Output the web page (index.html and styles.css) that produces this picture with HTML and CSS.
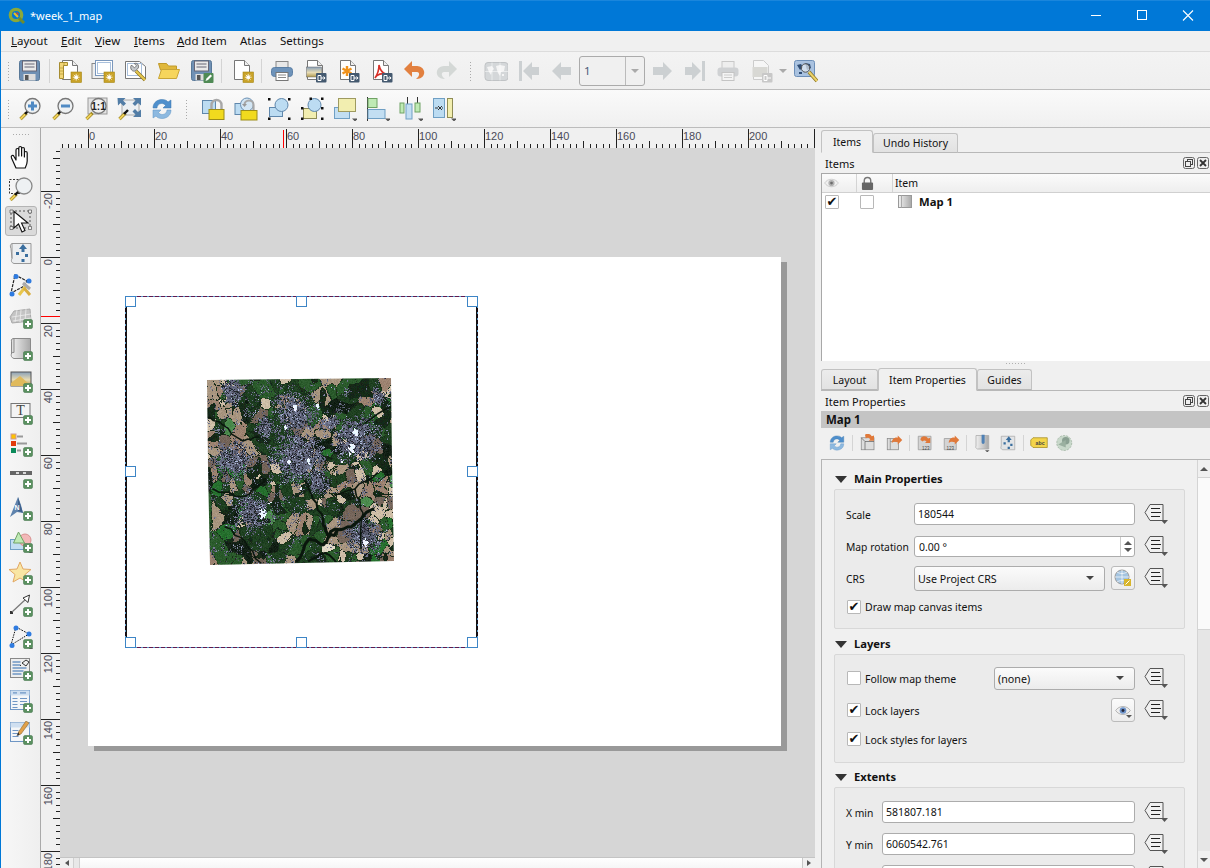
FILE: index.html
```html
<!DOCTYPE html>
<html lang="en">
<head>
<meta charset="utf-8">
<title>*week_1_map</title>
<link rel="stylesheet" href="styles.css">
</head>
<body>
<svg class="defs" width="0" height="0" aria-hidden="true">
<defs>
<linearGradient id="gmap" x1="0" x2="1"><stop offset="0" stop-color="#f2f2f2"/><stop offset="1" stop-color="#a8a8a8"/></linearGradient>
<linearGradient id="gsky" x1="0" x2="0" y1="0" y2="1"><stop offset="0" stop-color="#8aa0b8"/><stop offset=".55" stop-color="#e8dcb4"/><stop offset="1" stop-color="#b09a50"/></linearGradient>
<symbol id="plus" viewBox="0 0 24 24"><rect x="14.500" y="14.500" width="9" height="9" rx="1.500" fill="#5a9060" stroke="#4a7a50" stroke-width=".6"/><path d="M19 16v6M16 19h6" stroke="#fff" stroke-width="2"/></symbol>
<symbol id="gold" viewBox="0 0 24 24"><rect x="13" y="13" width="10.500" height="10.500" fill="#c9a227" stroke="#a58714" stroke-width=".6"/><circle cx="18.200" cy="18.200" r="1.700" fill="#fff"/><path d="M18.200 14.800v6.800M14.800 18.200h6.800M15.800 15.800l4.800 4.800M20.600 15.800l-4.800 4.800" stroke="#fff" stroke-width=".8"/></symbol>
<symbol id="xb" viewBox="0 0 24 24"><rect x="13" y="14" width="10.500" height="9.500" rx="1" fill="#44596f"/><path d="M15 16.500h3v5h-3zM18 19h4M20.500 17.500l1.600 1.500-1.600 1.500" fill="none" stroke="#fff"/></symbol>
<symbol id="doc" viewBox="0 0 24 24"><path d="M4.500 1.500h10l5 5v14h-15z" fill="#fff" stroke="#777"/><path d="M14.500 1.500v5h5" fill="#eee" stroke="#777"/></symbol>
<symbol id="floppy" viewBox="0 0 24 24"><rect x="1.500" y="1.500" width="20" height="20" rx="2" fill="#6f90b4" stroke="#587898"/><rect x="4.500" y="2" width="14" height="10" fill="#e9e9e9" stroke="#667"/><path d="M6.500 5h10M6.500 8h10" stroke="#667"/><rect x="5.500" y="15" width="12" height="6.500" fill="#ddd"/><rect x="7" y="16" width="3.500" height="5" fill="#555"/></symbol>
<symbol id="mag" viewBox="0 0 24 24"><path d="M2.500 22l6-6" stroke="#9c8420" stroke-width="3.200"/><path d="M2.500 22l5-5" stroke="#efd05a" stroke-width="1.800"/><path d="M7 17l3.500-3.500" stroke="#111" stroke-width="2.400"/><circle cx="14.500" cy="9" r="7.500" fill="#eef1f3" stroke="#777" stroke-width="1.300"/></symbol>
<symbol id="printer" viewBox="0 0 24 24"><rect x="6" y="2.500" width="12" height="7" fill="#e8e8e8" stroke="#888"/><rect x="1.500" y="8.500" width="21" height="9" rx="3" fill="#6e93ba" stroke="#5b7fa5"/><rect x="6" y="13.500" width="12" height="8" fill="#fff" stroke="#777"/><path d="M8 16h8M8 18.500h8" stroke="#888"/></symbol>
<symbol id="printer-off" viewBox="0 0 24 24"><rect x="6" y="2.500" width="12" height="7" fill="#eee" stroke="#c8c8c8"/><rect x="1.500" y="8.500" width="21" height="9" rx="3" fill="#cfd1d3"/><rect x="6" y="13.500" width="12" height="8" fill="#f4f4f4" stroke="#c4c4c4"/><path d="M8 16h8M8 18.500h8" stroke="#ccc"/></symbol>
<symbol id="arrow-left" viewBox="0 0 24 24"><path d="M2 12l9-9v5h10v8h-10v5z" fill="#ccd0d2"/></symbol>
<symbol id="arrow-right" viewBox="0 0 24 24"><path d="M22 12l-9-9v5h-10v8h10v5z" fill="#ccd0d2"/></symbol>
<symbol id="arrow-first" viewBox="0 0 24 24"><path d="M2 2h3v20h-3z M6 12l9-9v5h7v8h-7v5z" fill="#ccd0d2"/></symbol>
<symbol id="arrow-last" viewBox="0 0 24 24"><path d="M22 2h-3v20h3z M18 12l-9-9v5h-7v8h7v5z" fill="#ccd0d2"/></symbol>
<symbol id="undo" viewBox="0 0 24 24"><path d="M10 2L2 10l8 8v-5h5c3 0 3 4-1 7 7 0 9-5 8-8-1-4-5-5-8-5h-4z" fill="#e2803f"/></symbol>
<symbol id="redo" viewBox="0 0 24 24"><path d="M14 2l8 8-8 8v-5H9c-3 0-3 4 1 7-7 0-9-5-8-8 1-4 5-5 8-5h4z" fill="#d4d8d6"/></symbol>
<symbol id="refresh" viewBox="0 0 24 24"><path d="M3 11C3 5 8 2.500 12 2.500c3 0 5 1 6 2.500l3-2v8h-8l2.500-2.500C14.500 7 13 6.500 11.500 6.500 9 6.500 7 8.500 7 11z" fill="#4f8fcc" stroke="#3a76ad" stroke-width=".5"/><path d="M21 13c0 6-5 8.500-9 8.500-3 0-5-1-6-2.500l-3 2v-8h8l-2.500 2.500C9.500 17 11 17.500 12.500 17.500 15 17.500 17 15.500 17 13z" fill="#8db9e0" stroke="#5a92c4" stroke-width=".5"/></symbol>
<symbol id="mini" viewBox="0 0 24 24"><path d="M19 21.500h6l-3 3z" fill="#555"/></symbol>
<symbol id="i-new" viewBox="0 0 24 24"><use href="#doc"/><path d="M1.500 3.500h8v3h-4v13h-4z" fill="#f2d676" stroke="#a68c30"/><path d="M2 9h3M2 12h3M2 15h3M6 3.500v3" stroke="#a68c30" stroke-width=".6"/><use href="#gold"/></symbol>
<symbol id="i-dup" viewBox="0 0 24 24"><rect x="1" y="4.500" width="16" height="15" fill="#eee" stroke="#888"/><rect x="4.500" y="1.500" width="17" height="15" fill="#fff" stroke="#7a97bc"/><rect x="6.500" y="3.500" width="13" height="11" fill="none" stroke="#a9c0dc"/><use href="#gold"/></symbol>
<symbol id="i-mgr" viewBox="0 0 24 24"><path d="M1.500 2.500h14l6 5v12h-20z" fill="#fff" stroke="#777"/><rect x="3.500" y="4.500" width="14" height="12" fill="none" stroke="#a9c0dc"/><path d="M12 12l9 9" stroke="#8c7420" stroke-width="3.400"/><path d="M12 12l9 9" stroke="#e6c84e" stroke-width="2"/><path d="M8 6.500l2.500 2.300 2-2-2.200-2.300c3-1 5 1.500 4 4.500l-3 3c-3 1-5.500-2-4.300-5.500z" fill="#c4c8cc" stroke="#555" stroke-width=".7"/></symbol>
<symbol id="i-open" viewBox="0 0 24 24"><path d="M1.500 4.500h8l2 2.500h8v4h-16z" fill="#e0b83c" stroke="#c09a2a"/><path d="M1.500 19.500l3-9h18l-3 9z" fill="#f6d55c" stroke="#c9a536" stroke-linejoin="round"/></symbol>
<symbol id="i-saveas" viewBox="0 0 24 24"><use href="#floppy"/><rect x="13.500" y="14" width="10" height="10" rx="1" fill="#4f8a55"/><path d="M15.500 22l1-2.500 4-4 1.500 1.500-4 4z" fill="#fff"/></symbol>
<symbol id="i-page" viewBox="0 0 24 24"><use href="#doc"/><use href="#gold"/></symbol>
<symbol id="i-ximg" viewBox="0 0 24 24"><use href="#doc"/><rect x="3.500" y="8" width="15" height="10" fill="url(#gsky)" stroke="#666" stroke-width=".5"/><use href="#xb"/></symbol>
<symbol id="i-xsvg" viewBox="0 0 24 24"><use href="#doc"/><path d="M11 7v10M6.500 9.500l9 5M15.500 9.500l-9 5" stroke="#f0921c" stroke-width="2.400"/><use href="#xb"/></symbol>
<symbol id="i-xpdf" viewBox="0 0 24 24"><use href="#doc"/><path d="M10 6c1 5 3 8 7 9-4-1-9 0-11 4 2-3 4-8 4-13z" fill="none" stroke="#d8322a" stroke-width="1.600"/><use href="#xb"/></symbol>
<symbol id="i-atlas" viewBox="0 0 24 24"><rect x="1" y="3.500" width="23" height="18" rx="3" fill="#d4d7d9" stroke="#c0c3c5"/><path d="M3 8l5-1 2 3-2 2-1 4-2-3zM12 7l4-1 5 1-1 5-3 1-1 4-2-3-1-3zM18 15l2 0 0 2-2 0z" fill="#f4f4f4"/><path d="M1 12.500h23M8 3.500v18M16 3.500v18" stroke="#fff" stroke-width=".5"/></symbol>
<symbol id="i-xoff" viewBox="0 0 24 24"><path d="M4.500 1.500h10l5 5v14h-15z" fill="#f6f6f6" stroke="#ccc"/><rect x="3.500" y="8" width="15" height="10" fill="#d8d8d4"/><rect x="13" y="14" width="10.500" height="9.500" rx="1" fill="#c8c8c8"/><path d="M15 16.500h3v5h-3zM18 19h4" fill="none" stroke="#fff"/></symbol>
<symbol id="i-set" viewBox="0 0 24 24"><rect x=".5" y="1.500" width="20" height="16" rx="2" fill="#a9c2e0" stroke="#6d8fb8"/><path d="M3 6l4-1 2 3-3 3zM11 4l5 1 1 4-4 2zM5 13l3 0 0 2-3 0z" fill="#2f4d74"/><circle cx="11.500" cy="9" r="4.200" fill="#e4ebf2" fill-opacity=".7" stroke="#555" stroke-width="1"/><path d="M15 13l8 9" stroke="#8c7420" stroke-width="3.600"/><path d="M15 13l8 9" stroke="#ecd36a" stroke-width="2"/></symbol>
<symbol id="i-zin" viewBox="0 0 24 24"><use href="#mag"/><path d="M14.500 4.500v9M10 9h9" stroke="#4f8ac4" stroke-width="3"/></symbol>
<symbol id="i-zout" viewBox="0 0 24 24"><use href="#mag"/><path d="M10 9h9" stroke="#4f8ac4" stroke-width="3"/></symbol>
<symbol id="i-z11" viewBox="0 0 24 24"><rect x="4" y="1" width="19" height="16" fill="#e4e4e4" stroke="#999"/><path d="M2.500 22l6-6" stroke="#9c8420" stroke-width="3.200"/><path d="M2.500 22l5-5" stroke="#efd05a" stroke-width="1.800"/><circle cx="14.500" cy="9" r="7.500" fill="#f0f0f0" stroke="#777" stroke-width="1.300"/><text x="14.500" y="12.500" class="svgt11" text-anchor="middle">1:1</text></symbol>
<symbol id="i-zfull" viewBox="0 0 24 24"><rect x="5" y="3" width="17" height="15" fill="#eceff2" stroke="#aaa"/><path d="M.5 1h8l-2.500 2.500 3 3-2.500 2.500-3-3L1 8.500zM24 1h-8l2.500 2.500-3 3 2.500 2.500 3-3L24 8.500zM24 20h-8l2.500-2.500-3-3 2.500-2.500 3 3L24 12.500z" fill="#527da6"/><path d="M2.500 22l6-6" stroke="#9c8420" stroke-width="3.200"/><path d="M2.500 22l5-5" stroke="#efd05a" stroke-width="1.800"/><path d="M7 17l4-4" stroke="#111" stroke-width="2.400"/></symbol>
<symbol id="i-lock" viewBox="0 0 24 24"><rect x="1.500" y="3.500" width="13" height="13" fill="#bcdcf2" stroke="#5f87ac"/><path d="M10.500 13V8a5 5 0 0 1 10 0v5" fill="none" stroke="#a8a8a8" stroke-width="2.400"/><rect x="8" y="12.500" width="15" height="10" fill="#f1da1e" stroke="#9d8d18"/></symbol>
<symbol id="i-unlock" viewBox="0 0 24 24"><rect x="1" y="6.500" width="13" height="11" fill="#bcdcf2" stroke="#5f87ac"/><circle cx="13" cy="7.500" r="6.500" fill="#d3e6f4" stroke="#6a90b4"/><path d="M10.500 8a4.500 4.500 0 0 1 9 0v5" fill="none" stroke="#a8a8a8" stroke-width="2.200"/><path d="M8 7l2.500 3 2.500-3z" fill="#999"/><rect x="7" y="13.500" width="16" height="9.500" fill="#f1da1e" stroke="#9d8d18"/></symbol>
<symbol id="i-sel" viewBox="0 0 24 24"><rect x="2.500" y="10.500" width="13" height="9" fill="#bcdcf2" stroke="#5f87ac"/><circle cx="14.500" cy="8" r="6.500" fill="#bcdcf2" stroke="#5f87ac"/><path d="M1 1h2.500v2.500H1zM21 1h2.500v2.500H21zM1 20.500h2.500V23H1zM21 20.500h2.500V23H21z" fill="#111"/></symbol>
<symbol id="i-sel2" viewBox="0 0 24 24"><rect x="3.500" y="11.500" width="13" height="10" fill="#f2eeb0" stroke="#8f8c55"/><circle cx="14.500" cy="8" r="6.500" fill="#bcdcf2" stroke="#5f87ac"/><path d="M1 10h2.500v2.500H1zM9.500 .5h2.500V3H9.500zM21 .5h2.500V3H21zM21 10h2.500v2.500H21zM1 20.500h2.500V23H1zM21 20.500h2.500V23H21z" fill="#111"/></symbol>
<symbol id="i-raise" viewBox="0 0 24 24"><rect x="1.500" y="10.500" width="15" height="11" fill="#c2def2" stroke="#6f9fc4"/><rect x="5.500" y="1.500" width="17" height="13" fill="#f2eeb0" stroke="#9e9a60"/><use href="#mini"/></symbol>
<symbol id="i-align" viewBox="0 0 24 24"><path d="M1.500 0v24" stroke="#333"/><rect x="2" y="1.500" width="9" height="9" fill="#bfeab4" stroke="#6fa264"/><rect x="2" y="12.500" width="17" height="9" fill="#c2def2" stroke="#6f9fc4"/><use href="#mini"/></symbol>
<symbol id="i-dist" viewBox="0 0 24 24"><path d="M8.500 0v9M18.500 0v9" stroke="#333"/><rect x="1" y="6" width="4" height="10" fill="#bfeab4" stroke="#6fa264"/><rect x="7" y="7" width="6" height="15" fill="#c2def2" stroke="#6f9fc4"/><rect x="16" y="6" width="5" height="9" fill="#bfeab4" stroke="#6fa264"/><use href="#mini"/></symbol>
<symbol id="i-resize" viewBox="0 0 24 24"><rect x="1.500" y="1.500" width="11" height="19" fill="#bcdcf2" stroke="#6f9fc4"/><rect x="15.500" y="1.500" width="5" height="19" fill="#f2eeb0" stroke="#8f8c55"/><path d="M3 11h3M6 9l2 2-2 2M11 11h-1M10 9l-2 2 2 2" fill="none" stroke="#333"/><use href="#mini"/></symbol>
<symbol id="l-hand" viewBox="0 0 24 24"><path d="M7 23L2.500 13c-1-2.500 1.500-3.500 2.500-1.500L7 15V5c0-2 2.800-2 2.800 0v6V3c0-2 2.800-2 2.800 0v8V4c0-2 2.800-2 2.800 0v8V8c0-2 2.800-2 2.800 0v8c0 3-1 5-2 7z" fill="#fff" stroke="#111" stroke-width="1.200" stroke-linejoin="round"/></symbol>
<symbol id="l-zoom" viewBox="0 0 24 24"><rect x=".5" y="2.500" width="14" height="14" fill="none" stroke="#333" stroke-dasharray="2 1.500"/><path d="M1.500 23l6-6" stroke="#9c8420" stroke-width="3.200"/><path d="M1.500 23l5-5" stroke="#efd05a" stroke-width="1.800"/><path d="M6 18l4-4" stroke="#111" stroke-width="2.400"/><circle cx="15" cy="9" r="8" fill="#eef1f3" stroke="#888" stroke-width="1.300"/></symbol>
<symbol id="l-sel" viewBox="0 0 24 24"><rect x="2" y="2" width="19" height="17" fill="none" stroke="#555" stroke-dasharray="2 2"/><path d="M1 1h3v3H1zM19.500 1h3v3h-3zM1 17.500h3v3H1zM19.500 17.500h3v3h-3z" fill="#f0f0f0" stroke="#555" stroke-width=".7"/><path d="M5 2.500V19l4.500-4 3.500 8 3-1.500-3.500-7.500H19z" fill="#fff" stroke="#111" stroke-width="1.100"/></symbol>
<symbol id="l-move" viewBox="0 0 24 24"><path d="M3 2.500h19v20H5c-3-1-3-3-2-5z" fill="#eceef0" stroke="#999"/><path d="M3 2.500c-2 1-2 3-1 5l1 10" fill="#ccc" stroke="#999"/><path d="M14 3l4 5h-2.500v3h-3V8H10zM7 11h3v3H7zM19 13v3h-3v-3zM12.500 18h3v3h-3z" fill="#3a6e9e"/></symbol>
<symbol id="l-node" viewBox="0 0 24 24"><path d="M6 2l12 6-4.500 6L2 20z" fill="none" stroke="#222" stroke-width="1.200" stroke-dasharray="3 1"/><circle cx="7" cy="3.500" r="2.500" fill="#2f7be0"/><circle cx="20" cy="8" r="2.500" fill="#2f7be0"/><circle cx="3" cy="21" r="2.500" fill="#2f7be0"/><path d="M10 22l7-9" stroke="#e8c64c" stroke-width="3"/><path d="M14 10l7 6" stroke="#aaa" stroke-width="3"/><path d="M15 15l6 7" stroke="#d8ae40" stroke-width="3"/></symbol>
<symbol id="l-3d" viewBox="0 0 24 24"><path d="M5 6l16-2 1 12-19 2-2-6z" fill="#c4c4c4" stroke="#aaa"/><path d="M3 12l19-3M4 16l18-3M8 5l-2 12M12 5l-1 12M17 4l-1 12" stroke="#eee" stroke-width=".8"/><use href="#plus"/></symbol>
<symbol id="l-map" viewBox="0 0 24 24"><path d="M4 1.500h17.500v20H5c-3-1-3-3-2.500-5V3z" fill="url(#gmap)" stroke="#8a8a8a"/><path d="M5 1.500c-2 0-3 1-2.500 3V17c0-1.500 1-2 2.500-1.500z" fill="#ddd" stroke="#8a8a8a"/><use href="#plus"/></symbol>
<symbol id="l-pic" viewBox="0 0 24 24"><rect x="2" y="3" width="20" height="14" fill="url(#gsky)" stroke="#555"/><path d="M2 14l9-7 8 7v3H2z" fill="#e0ba5c"/><use href="#plus"/></symbol>
<symbol id="l-label" viewBox="0 0 24 24"><rect x="2" y="2.500" width="19" height="14" fill="#f4f4f4" stroke="#777"/><text x="11.500" y="14" class="svgt14" text-anchor="middle">T</text><use href="#plus"/></symbol>
<symbol id="l-leg" viewBox="0 0 24 24"><rect x="2" y="1" width="5" height="5" fill="#fdc202" stroke="#c99"/><rect x="2" y="8" width="5" height="5" fill="#e23c0c"/><rect x="2" y="15" width="5" height="5" fill="#0b8a5a"/><path d="M8 3.500h6M8 10.500h10M8 17.500h4" stroke="#999" stroke-width="1.800"/><use href="#plus"/></symbol>
<symbol id="l-scale" viewBox="0 0 24 24"><rect x="1" y="6" width="22" height="4" fill="#666"/><path d="M7 8h3M14 8h3" stroke="#fff" stroke-width="1.600"/><use href="#plus"/></symbol>
<symbol id="l-north" viewBox="0 0 24 24"><path d="M1 20L9 0l3 8 2 8-6-1z" fill="#5f83ad"/><path d="M9 0l5 16-2-1-3-1z" fill="#3f618c"/><text x="8" y="12.500" class="svgt7" text-anchor="middle">N</text><use href="#plus"/></symbol>
<symbol id="l-shape" viewBox="0 0 24 24"><rect x="1.500" y="10.500" width="14" height="10" fill="#c2def2" stroke="#6f9fc4"/><circle cx="16" cy="11" r="6" fill="#f2b8b8" stroke="#d89090"/><path d="M4.500 14l5-11 6 11z" fill="#bfeab4" stroke="#6fa264"/><use href="#plus"/><path d="M20 23.500h5l-2.500 2z" fill="#333"/></symbol>
<symbol id="l-star" viewBox="0 0 24 24"><path d="M11 1l3 7 8 .5-6 5 2 7.500-7-4-7 4 2-7.500-6-5L8 8z" fill="#f9e6a4" stroke="#e2a864"/><use href="#plus"/></symbol>
<symbol id="l-arrow" viewBox="0 0 24 24"><rect x="1" y="18" width="3" height="3" fill="#333"/><path d="M3 19L17 6" stroke="#777" stroke-width="1.200"/><path d="M20.500 2L19 9.500l-5-4.500z" fill="#fff" stroke="#333"/><use href="#plus"/></symbol>
<symbol id="l-pts" viewBox="0 0 24 24"><path d="M7 2l13 7" stroke="#222" stroke-dasharray="2 1"/><path d="M7 2L2 20M2 20l18-11" stroke="#111" stroke-dasharray="1.500 1"/><circle cx="7" cy="3" r="2.500" fill="#2f7be0"/><circle cx="20" cy="9" r="2.500" fill="#2f7be0"/><circle cx="3" cy="20.500" r="2.500" fill="#2f7be0"/><use href="#plus"/><path d="M20 23.500h5l-2.500 2z" fill="#333"/></symbol>
<symbol id="l-html" viewBox="0 0 24 24"><rect x="1.500" y="1.500" width="19" height="19" fill="#eee" stroke="#888"/><path d="M3.500 5h8M3.500 8h8M3.500 11h14M3.500 14h11M3.500 17h9" stroke="#6f96c4" stroke-width="1.600"/><path d="M13 6l4-3M13 6l4 3 3-4-3-2M12 9l-1-1" fill="none" stroke="#333"/><use href="#plus"/></symbol>
<symbol id="l-table" viewBox="0 0 24 24"><rect x="1.500" y="1.500" width="19" height="19" fill="#f4f6f8" stroke="#6f96c4"/><rect x="1.500" y="1.500" width="19" height="5" fill="#cfdff0"/><path d="M4 3.800h4M11 3.800h6M3.500 9.500h5M11 9.500h7M3.500 12.500h5M11 12.500h7M3.500 15.500h5M11 15.500h7M3.500 18.500h5" stroke="#6f96c4" stroke-width="1.200"/><use href="#plus"/></symbol>
<symbol id="l-fixed" viewBox="0 0 24 24"><rect x="1.500" y="1.500" width="19" height="19" fill="#f4f6f8" stroke="#6f96c4"/><rect x="1.500" y="1.500" width="19" height="5" fill="#cfdff0"/><path d="M3.500 9.500h6M3.500 12.500h6M3.500 15.500h6" stroke="#6f96c4" stroke-width="1.200"/><path d="M17 0l3 2-8 11-3 1 .5-3z" fill="#e2a14a" stroke="#8c6a30" stroke-width=".6"/><path d="M9.500 11l-2 4 3-1z" fill="#333"/><use href="#plus"/></symbol>
<symbol id="d-ext1" viewBox="0 0 24 24"><rect x="3" y="5" width="17" height="16" fill="#ddd" stroke="#888"/><path d="M3 5l5 5h12M8 10v11" fill="none" stroke="#666"/><path d="M8 1a6 6 0 0 1 9 2l3-1v7h-7l2-2c-1-2-4-3-6-1z" fill="#e0793a"/></symbol>
<symbol id="d-ext2" viewBox="0 0 24 24"><rect x="3" y="6" width="15" height="15" fill="#ddd" stroke="#888"/><path d="M7 10h11M7 6v15" stroke="#888"/><path d="M9 12c0-5 4-8 8-7V2l6 6-6 6v-3c-3-1-6-1-8 1z" fill="#e0793a"/></symbol>
<symbol id="d-ext3" viewBox="0 0 24 24"><path d="M3 3h17v18H3z" fill="#d4d4d4" stroke="#999"/><path d="M6 8c0-4 3-5 5-5s4 1 5 3l3-1v7h-7l2-2c-2-2-4-2-5 0z" fill="#e0793a"/><text x="13" y="21" class="svgt6" text-anchor="middle">123</text></symbol>
<symbol id="d-ext4" viewBox="0 0 24 24"><path d="M3 6h16v15H3z" fill="#d4d4d4" stroke="#999"/><path d="M9 12c0-5 4-8 8-7V2l6 6-6 6v-3c-3-1-6-1-8 1z" fill="#e0793a"/><text x="11" y="21" class="svgt6" text-anchor="middle">123</text></symbol>
<symbol id="d-book" viewBox="0 0 24 24"><path d="M4 2h17v18H6c-2-1-3-2-2-4z" fill="url(#gmap)" stroke="#aaa"/><path d="M11.500 1h4v10c0 3-4 3-4 0z" fill="#4f81b5"/><path d="M16 21.500h6l-3 3z" fill="#555"/></symbol>
<symbol id="d-move" viewBox="0 0 24 24"><path d="M3 3h18v18H5c-3-1-3-3-2-5z" fill="#e2e4e6" stroke="#aaa"/><path d="M13 3l4 5h-2.500v3h-3V8H9zM6 11h3v3H6zM18 13v3h-3v-3zM11.500 17h3v3h-3z" fill="#3a6e9e"/></symbol>
<symbol id="d-abc" viewBox="0 0 24 24"><path d="M1 8l3-3h19v13H4l-3-3z" fill="#f3d44a" stroke="#a38b20"/><text x="13.500" y="14.500" class="svgt7b" text-anchor="middle">abc</text></symbol>
<symbol id="d-gear" viewBox="0 0 24 24"><circle cx="11" cy="12" r="10" fill="#c8d8ca" stroke="#9bb09e" stroke-dasharray="3 1.500"/><circle cx="13" cy="9" r="5" fill="#8aa092"/><path d="M3 14l10-6v10z" fill="#9ab0a0"/></symbol>
<symbol id="dd" viewBox="0 0 24 22"><path d="M6 1.500h13v16H6L1 9.500z" fill="#f0f0f0" stroke="#555"/><path d="M7 5.500h9M7 9.500h10M7 13.500h9" stroke="#222" stroke-width="1.200"/><path d="M17 17h7l-3.500 4z" fill="#555"/></symbol>
<symbol id="eye" viewBox="0 0 24 16"><path d="M1 8c5-8 17-8 22 0-5 8-17 8-22 0z" fill="#eee" stroke="#999"/><circle cx="12" cy="8" r="5" fill="#6c92c8"/><circle cx="12" cy="8" r="2.200" fill="#223"/></symbol>
<symbol id="crs" viewBox="0 0 18 18"><circle cx="8" cy="8" r="7" fill="#a4c4e0" stroke="#999"/><path d="M1 8h14M8 1v14M3 3c3 2 7 2 10 0M3 13c3-2 7-2 10 0" stroke="#fff" stroke-width=".7" fill="none"/><rect x="10" y="10" width="7" height="7" fill="#d8b52c"/><path d="M11.500 15.500l4-4" stroke="#fff"/></symbol>
<symbol id="qgis" viewBox="0 0 18 18"><circle cx="8" cy="8" r="5.700" fill="none" stroke="#8aa83a" stroke-width="3.300"/><path d="M11 11l5 5" stroke="#6f8c2c" stroke-width="3"/><path d="M6 6l4 4" stroke="#e8c020" stroke-width="2.200"/><path d="M8.500 5.500l2 2" stroke="#d8442c" stroke-width="1.500"/></symbol>
<symbol id="float" viewBox="0 0 12 12"><rect x=".5" y=".5" width="11" height="11" rx="2" fill="#eee" stroke="#666"/><rect x="4.500" y="2.500" width="5" height="5" fill="none" stroke="#444"/><rect x="2.500" y="4.500" width="5" height="5" fill="#eee" stroke="#444"/></symbol>
<symbol id="close" viewBox="0 0 12 12"><rect x=".5" y=".5" width="11" height="11" rx="2" fill="#eee" stroke="#666"/><path d="M3 3l6 6M9 3l-6 6" stroke="#333" stroke-width="1.800"/></symbol>
<pattern id="hticks" x="47" y="0" width="66" height="20" patternUnits="userSpaceOnUse"><path d="M.5 1v19M33.500 13v7M7.100 16v4M13.700 16v4M20.300 16v4M26.900 16v4M40.100 16v4M46.700 16v4M53.300 16v4M59.900 16v4" stroke="#222" fill="none" shape-rendering="crispEdges"/></pattern>
<pattern id="vticks" x="0" y="129" width="20" height="66" patternUnits="userSpaceOnUse"><path d="M0 .5h19M12 33.500h7M15 7.100h4M15 13.700h4M15 20.300h4M15 26.900h4M15 40.100h4M15 46.700h4M15 53.300h4M15 59.900h4" stroke="#222" fill="none" shape-rendering="crispEdges"/></pattern>
</defs>
</svg>

<div class="window">
  <header class="titlebar">
    <svg class="app-icon"><use href="#qgis"/></svg>
    <span class="title-text">*week_1_map</span>
    <div class="win-buttons">
      <svg class="win-btn" viewBox="0 0 46 31"><path d="M18 15.500h10" stroke="#fff"/></svg>
      <svg class="win-btn" viewBox="0 0 46 31"><rect x="18.500" y="10.500" width="9" height="9" fill="none" stroke="#fff"/></svg>
      <svg class="win-btn" viewBox="0 0 46 31"><path d="M18 10.500l10 10M28 10.500l-10 10" stroke="#fff" stroke-width="1.100"/></svg>
    </div>
  </header>

  <nav class="menubar">
    <span class="menu m-layout"><u>L</u>ayout</span>
    <span class="menu m-edit"><u>E</u>dit</span>
    <span class="menu m-view"><u>V</u>iew</span>
    <span class="menu m-items"><u>I</u>tems</span>
    <span class="menu m-add"><u>A</u>dd Item</span>
    <span class="menu m-atlas">Atlas</span>
    <span class="menu">Settings</span>
  </nav>

  <div class="toolbar tb-one">
    <i class="grip"></i>
    <span class="tool"><svg class="ic"><use href="#floppy"/></svg></span>
    <i class="sep"></i>
    <span class="tool"><svg class="ic"><use href="#i-new"/></svg></span>
    <span class="tool"><svg class="ic"><use href="#i-dup"/></svg></span>
    <span class="tool"><svg class="ic"><use href="#i-mgr"/></svg></span>
    <span class="tool"><svg class="ic"><use href="#i-open"/></svg></span>
    <span class="tool"><svg class="ic"><use href="#i-saveas"/></svg></span>
    <i class="sep"></i>
    <span class="tool"><svg class="ic"><use href="#i-page"/></svg></span>
    <i class="sep"></i>
    <span class="tool"><svg class="ic"><use href="#printer"/></svg></span>
    <span class="tool"><svg class="ic"><use href="#i-ximg"/></svg></span>
    <span class="tool"><svg class="ic"><use href="#i-xsvg"/></svg></span>
    <span class="tool"><svg class="ic"><use href="#i-xpdf"/></svg></span>
    <span class="tool"><svg class="ic"><use href="#undo"/></svg></span>
    <span class="tool"><svg class="ic"><use href="#redo"/></svg></span>
    <i class="grip grip-mid"></i>
    <span class="tool"><svg class="ic"><use href="#i-atlas"/></svg></span>
    <span class="tool"><svg class="ic"><use href="#arrow-first"/></svg></span>
    <span class="tool"><svg class="ic"><use href="#arrow-left"/></svg></span>
    <div class="page-combo"><span class="page-val">1</span><span class="page-drop"><i class="tri tri-grey"></i></span></div>
    <span class="tool"><svg class="ic"><use href="#arrow-right"/></svg></span>
    <span class="tool"><svg class="ic"><use href="#arrow-last"/></svg></span>
    <span class="tool"><svg class="ic"><use href="#printer-off"/></svg></span>
    <span class="tool"><svg class="ic"><use href="#i-xoff"/></svg></span>
    <span class="tool-arrow"><i class="tri tri-grey"></i></span>
    <span class="tool"><svg class="ic"><use href="#i-set"/></svg></span>
  </div>

  <div class="toolbar tb-two">
    <i class="grip"></i>
    <span class="tool"><svg class="ic"><use href="#i-zin"/></svg></span>
    <span class="tool"><svg class="ic"><use href="#i-zout"/></svg></span>
    <span class="tool"><svg class="ic"><use href="#i-z11"/></svg></span>
    <span class="tool"><svg class="ic"><use href="#i-zfull"/></svg></span>
    <span class="tool"><svg class="ic"><use href="#refresh"/></svg></span>
    <i class="grip grip-mid2"></i>
    <span class="tool"><svg class="ic"><use href="#i-lock"/></svg></span>
    <span class="tool"><svg class="ic"><use href="#i-unlock"/></svg></span>
    <span class="tool"><svg class="ic"><use href="#i-sel"/></svg></span>
    <span class="tool"><svg class="ic"><use href="#i-sel2"/></svg></span>
    <span class="tool"><svg class="ic ov"><use href="#i-raise"/></svg></span>
    <span class="tool"><svg class="ic ov"><use href="#i-align"/></svg></span>
    <span class="tool"><svg class="ic ov"><use href="#i-dist"/></svg></span>
    <span class="tool"><svg class="ic ov"><use href="#i-resize"/></svg></span>
  </div>

  <main class="main">
    <aside class="lefttools">
      <i class="grip-h"></i>
      <span class="ltool"><svg class="ic"><use href="#l-hand"/></svg></span>
      <span class="ltool"><svg class="ic"><use href="#l-zoom"/></svg></span>
      <span class="ltool active"><svg class="ic"><use href="#l-sel"/></svg></span>
      <span class="ltool"><svg class="ic"><use href="#l-move"/></svg></span>
      <span class="ltool"><svg class="ic"><use href="#l-node"/></svg></span>
      <span class="ltool"><svg class="ic"><use href="#l-3d"/></svg></span>
      <span class="ltool"><svg class="ic"><use href="#l-map"/></svg></span>
      <span class="ltool"><svg class="ic"><use href="#l-pic"/></svg></span>
      <span class="ltool"><svg class="ic"><use href="#l-label"/></svg></span>
      <span class="ltool"><svg class="ic"><use href="#l-leg"/></svg></span>
      <span class="ltool"><svg class="ic"><use href="#l-scale"/></svg></span>
      <span class="ltool"><svg class="ic"><use href="#l-north"/></svg></span>
      <span class="ltool"><svg class="ic ov"><use href="#l-shape"/></svg></span>
      <span class="ltool"><svg class="ic"><use href="#l-star"/></svg></span>
      <span class="ltool"><svg class="ic"><use href="#l-arrow"/></svg></span>
      <span class="ltool"><svg class="ic ov"><use href="#l-pts"/></svg></span>
      <span class="ltool"><svg class="ic"><use href="#l-html"/></svg></span>
      <span class="ltool"><svg class="ic"><use href="#l-table"/></svg></span>
      <span class="ltool"><svg class="ic"><use href="#l-fixed"/></svg></span>
    </aside>

    <section class="workspace">
      <svg class="hruler" width="774" height="20">
        <rect x="19" width="755" height="20" fill="url(#hticks)"/>
        <path d="M242.500 2v18" stroke="#f00" shape-rendering="crispEdges"/>
        <g class="rtext">
          <text x="48" y="12">0</text><text x="114" y="12">20</text><text x="180" y="12">40</text><text x="246" y="12">60</text><text x="312" y="12">80</text><text x="378" y="12">100</text><text x="444" y="12">120</text><text x="510" y="12">140</text><text x="576" y="12">160</text><text x="642" y="12">180</text><text x="708" y="12">200</text>
        </g>
      </svg>
      <svg class="vruler" width="19" height="740">
        <rect y="20" width="19" height="720" fill="url(#vticks)"/>
        <path d="M0 188.500h19" stroke="#f00" shape-rendering="crispEdges"/>
        <g class="rtext" text-anchor="end">
          <text transform="translate(11 65) rotate(-90)">-20</text><text transform="translate(11 131) rotate(-90)">0</text><text transform="translate(11 197) rotate(-90)">20</text><text transform="translate(11 263) rotate(-90)">40</text><text transform="translate(11 329) rotate(-90)">60</text><text transform="translate(11 395) rotate(-90)">80</text><text transform="translate(11 461) rotate(-90)">100</text><text transform="translate(11 527) rotate(-90)">120</text><text transform="translate(11 593) rotate(-90)">140</text><text transform="translate(11 659) rotate(-90)">160</text><text transform="translate(11 725) rotate(-90)">180</text>
        </g>
      </svg>
      <div class="canvas">
        <div class="page"></div>
        <canvas class="sat" id="sat" width="190" height="190"></canvas>
        <div class="mapitem">
          <i class="h h-tl"></i><i class="h h-tc"></i><i class="h h-tr"></i>
          <i class="h h-ml"></i><i class="h h-mr"></i>
          <i class="h h-bl"></i><i class="h h-bc"></i><i class="h h-br"></i>
        </div>
      </div>
      <div class="hscroll">
        <span class="sb-btn"><i class="tri-l"></i></span>
        <span class="sb-handle"></span>
        <span class="sb-track"></span>
        <span class="sb-btn sb-right"><i class="tri-r"></i></span>
      </div>
    </section>

    <aside class="dock">
      <div class="tabs tabs-top">
        <span class="tab on tab-items">Items</span>
        <span class="tab tab-undo">Undo History</span>
      </div>
      <div class="dock-title"><span>Items</span><span class="dock-btns"><svg class="db"><use href="#float"/></svg><svg class="db"><use href="#close"/></svg></span></div>
      <div class="tree">
        <div class="tree-head">
          <span class="col col-a"><svg class="eye-h"><use href="#eye"/></svg></span>
          <span class="col col-b"><svg class="lock-h" viewBox="0 0 14 16"><path d="M3.500 8V5a3.500 3.500 0 0 1 7 0v3" fill="none" stroke="#777" stroke-width="1.500"/><rect x="1" y="7" width="12" height="8" rx="1" fill="#666"/></svg></span>
          <span class="col col-c">Item</span>
        </div>
        <div class="tree-row">
          <span class="col col-a"><i class="cb checked">✔</i></span>
          <span class="col col-b"><i class="cb"></i></span>
          <span class="col col-c"><svg class="map-mini" viewBox="0 0 14 13"><rect x=".5" y=".5" width="13" height="12" fill="url(#gmap)" stroke="#999"/><path d="M3.500 .5v12" stroke="#aaa"/></svg><b>Map 1</b></span>
        </div>
      </div>
      <div class="splitter"></div>
      <div class="tabs tabs-bottom">
        <span class="tab tab-layout">Layout</span>
        <span class="tab on tab-props">Item Properties</span>
        <span class="tab tab-guides">Guides</span>
      </div>
      <div class="dock-title"><span>Item Properties</span><span class="dock-btns"><svg class="db"><use href="#float"/></svg><svg class="db"><use href="#close"/></svg></span></div>
      <div class="item-bar">Map 1</div>
      <div class="item-tools">
        <span class="it"><svg class="ic18"><use href="#refresh"/></svg></span><i class="it-sep"></i>
        <span class="it"><svg class="ic18"><use href="#d-ext1"/></svg></span>
        <span class="it"><svg class="ic18"><use href="#d-ext2"/></svg></span><i class="it-sep"></i>
        <span class="it"><svg class="ic18"><use href="#d-ext3"/></svg></span>
        <span class="it"><svg class="ic18"><use href="#d-ext4"/></svg></span><i class="it-sep"></i>
        <span class="it"><svg class="ic18 ov"><use href="#d-book"/></svg></span>
        <span class="it"><svg class="ic18"><use href="#d-move"/></svg></span><i class="it-sep"></i>
        <span class="it"><svg class="ic18"><use href="#d-abc"/></svg></span>
        <span class="it"><svg class="ic18"><use href="#d-gear"/></svg></span>
      </div>
      <div class="scrollarea">
        <div class="props">
          <section class="sec">
            <h3 class="sec-h"><i class="disc"></i>Main Properties</h3>
            <div class="box box-main">
              <div class="row"><label class="lbl">Scale</label><span class="input grow">180544</span><svg class="dd"><use href="#dd"/></svg></div>
              <div class="row"><label class="lbl">Map rotation</label><span class="input spin grow"><span class="spin-v">0.00 °</span><span class="spin-b"><i class="tri-up"></i><i class="tri-dn"></i></span></span><svg class="dd"><use href="#dd"/></svg></div>
              <div class="row"><label class="lbl">CRS</label><span class="combo grow">Use Project CRS<i class="tri"></i></span><span class="sq"><svg class="ic16"><use href="#crs"/></svg></span><svg class="dd"><use href="#dd"/></svg></div>
              <div class="row row-c"><i class="cb checked">✔</i><span class="cl">Draw map canvas items</span></div>
            </div>
          </section>
          <section class="sec">
            <h3 class="sec-h"><i class="disc"></i>Layers</h3>
            <div class="box box-layers">
              <div class="row"><i class="cb"></i><span class="cl cl-follow">Follow map theme</span><span class="combo grow">(none)<i class="tri"></i></span><svg class="dd"><use href="#dd"/></svg></div>
              <div class="row"><i class="cb checked">✔</i><span class="cl grow">Lock layers</span><span class="sq"><svg class="ic-eye"><use href="#eye"/></svg><i class="sq-tri"></i></span><svg class="dd"><use href="#dd"/></svg></div>
              <div class="row row-c"><i class="cb checked">✔</i><span class="cl">Lock styles for layers</span></div>
            </div>
          </section>
          <section class="sec sec-ext">
            <h3 class="sec-h"><i class="disc"></i>Extents</h3>
            <div class="box box-ext">
              <div class="row"><label class="lbl lbl-s">X min</label><span class="input grow">581807.181</span><svg class="dd"><use href="#dd"/></svg></div>
              <div class="row"><label class="lbl lbl-s">Y min</label><span class="input grow">6060542.761</span><svg class="dd"><use href="#dd"/></svg></div>
              <div class="row"><label class="lbl lbl-s"></label><span class="input grow"></span><svg class="dd"><use href="#dd"/></svg></div>
            </div>
          </section>
        </div>
        <div class="vscroll">
          <span class="vs-btn"><i class="tri-up"></i></span>
          <span class="vs-handle"></span>
          <span class="vs-track"></span>
          <span class="vs-btn"><i class="tri-dn"></i></span>
        </div>
      </div>
    </aside>
  </main>
</div>
<script src="app.js"></script>
</body>
</html>
```
FILE: styles.css
```css
* { box-sizing: border-box; }
html, body { margin: 0; padding: 0; }
body { width: 1210px; height: 868px; overflow: hidden; background: #f0f0f0; font-family: "Noto Sans", "Open Sans", sans-serif; font-size: 11px; color: #111; }
i { font-style: normal; display: block; }
.defs { position: absolute; }
.svgt11 { font: 700 10px "Liberation Sans", sans-serif; fill: #222; }
.svgt14 { font: 400 14px "Liberation Serif", serif; fill: #444; }
.svgt7 { font: 700 7px "Liberation Sans", sans-serif; fill: #fff; }
.svgt7b { font: 700 7px "Liberation Sans", sans-serif; fill: #444; }
.svgt6 { font: 400 6px "Liberation Sans", sans-serif; fill: #444; }
.window { width: 1210px; height: 868px; display: flex; flex-direction: column; border-left: 1px solid #0078d7; }

.titlebar { height: 31px; flex: none; background: #0078d7; border-top: 1px solid #1a86dc; margin-left: -1px; display: flex; align-items: center; color: #fff; }
.app-icon { width: 18px; height: 18px; margin-left: 8px; }
.title-text { margin: -1px 0 0 4px; font-size: 11px; }
.win-buttons { margin-left: auto; margin-right: -1px; display: flex; margin-top: -1px; }
.win-btn { width: 46px; height: 31px; display: block; }

.menubar { height: 20px; flex: none; background: #f0f0f0; display: flex; align-items: center; padding: 0 0 2px 10px; font-size: 11.5px; }
.menu { white-space: nowrap; }
.m-layout { width: 50px; }
.m-edit { width: 34px; }
.m-view { width: 39px; }
.m-items { width: 43px; }
.m-add { width: 63px; }
.m-atlas { width: 40px; }

.toolbar { flex: none; display: flex; align-items: center; border-bottom: 1px solid #bcbcbc; }
.tb-one { height: 39px; border-top: 1px solid #dcdcdc; background: linear-gradient(#f3f3f3, #efefef); }
.tb-two { height: 38px; background: linear-gradient(#fafafa, #f0f0f0); }
.grip { width: 4px; height: 20px; margin: 0 2px 0 6px; background-image: radial-gradient(#aaa 0.7px, transparent 0.8px); background-size: 3px 3px; }
.grip-mid { margin: 0 6px; }
.grip-mid2 { margin: 0 7px; }
.tool { width: 33px; height: 33px; flex: none; display: flex; align-items: center; justify-content: center; }
.ic { width: 24px; height: 24px; display: block; }
.ov { overflow: visible; }
.sep { width: 7px; height: 24px; flex: none; position: relative; }
.sep::before { content: ""; position: absolute; left: 3px; top: 0; height: 100%; width: 1px; background: #d4d4d4; }
.page-combo { width: 66px; height: 30px; flex: none; margin-left: 1px; display: flex; border: 1px solid #ababab; border-radius: 3px; background: #f0f0f0; }
.page-val { flex: 1; padding: 6px 0 0 4px; color: #4a5a78; font-size: 11.5px; }
.page-drop { width: 19px; border-left: 1px solid #bbb; display: flex; align-items: center; justify-content: center; }
.tool-arrow { width: 12px; flex: none; display: flex; align-items: center; justify-content: center; }
.tri { width: 0; height: 0; border: 4px solid transparent; border-top: 4px solid #444; border-bottom: 0; }
.tri-grey { border-top-color: #aaa; }

.main { flex: 1; min-height: 0; display: flex; }
.lefttools { width: 40px; flex: none; padding-left: 1px; border-right: 1px solid #aaa; background: linear-gradient(90deg, #f7f7f7, #efefef); display: flex; flex-direction: column; align-items: center; }
.grip-h { width: 18px; height: 13px; flex: none; background-image: radial-gradient(#aaa 0.7px, transparent 0.8px); background-size: 3px 3px; background-position: 0 5px; background-repeat: repeat-x; }
.ltool { height: 32px; width: 32px; flex: none; display: flex; align-items: center; justify-content: center; }
.ltool.active { height: 30px; margin: 1px 0; background: #dadada; border: 1px solid #b4b4b4; border-radius: 3px; }

.workspace { width: 774px; flex: none; display: grid; grid-template-columns: 19px 755px; grid-template-rows: 20px 709px 11px; position: relative; background: #f0f0f0; }
.hruler { position: absolute; left: 0; top: 0; }
.vruler { position: absolute; left: 0; top: 0; }
.rtext { font: 11px "Liberation Sans", sans-serif; fill: #4a4a58; }
.canvas { grid-column: 2; grid-row: 2; background: #d6d6d6; position: relative; overflow: hidden; }
.page { position: absolute; left: 28px; top: 109px; width: 693px; height: 489px; background: #fff; box-shadow: 6px 5px 0 #999; }
.sat { position: absolute; left: 145px; top: 229px; width: 190px; height: 190px; }
.mapitem { position: absolute; left: 65px; top: 148px; width: 353px; height: 352px;
  background:
    repeating-linear-gradient(90deg, #611a50 0 4px, #5a9ac8 4px 6px) 0 0 / 100% 1px no-repeat,
    repeating-linear-gradient(90deg, #611a50 0 4px, #5a9ac8 4px 6px) 0 100% / 100% 1px no-repeat,
    repeating-linear-gradient(0deg, #1a0a14 0 4px, #5a9ac8 4px 6px) 0 0 / 1px 100% no-repeat,
    linear-gradient(#111, #111) 1px 0 / 1px 100% no-repeat,
    repeating-linear-gradient(0deg, #1a0a14 0 4px, #5a9ac8 4px 6px) 100% 0 / 1px 100% no-repeat,
    linear-gradient(#111, #111) calc(100% - 1px) 0 / 1px 100% no-repeat;
}
.h { position: absolute; width: 11px; height: 11px; background: #fff; border: 1px solid #3d85c6; }
.h-tl { left: 0; top: 0; }
.h-tc { left: 171px; top: 0; }
.h-tr { right: 0; top: 0; }
.h-ml { left: 0; top: 170px; }
.h-mr { right: 0; top: 170px; }
.h-bl { left: 0; bottom: 0; }
.h-bc { left: 171px; bottom: 0; }
.h-br { right: 0; bottom: 0; }
.hscroll { grid-column: 2; grid-row: 3; display: flex; border-top: 1px solid #c4c4c4; background: #f8f8f8; }
.sb-btn { width: 13px; background: #f0f0f0; display: flex; align-items: center; justify-content: center; }
.sb-right { border-left: 1px solid #c8c8c8; }
.sb-handle { width: 7px; background: #e8e8e8; border: solid #d0d0d0; border-width: 0 1px; }
.sb-track { flex: 1; background: linear-gradient(#ffffff, #f6f6f6); }
.tri-l { border: 3px solid transparent; border-right: 4px solid #555; border-left: 0; }
.tri-r { border: 3px solid transparent; border-left: 4px solid #555; border-right: 0; }

.dock { width: 395px; flex: none; padding-left: 6px; display: flex; flex-direction: column; background: #f0f0f0; }
.tabs { display: flex; align-items: flex-end; flex: none; border-bottom: 1px solid #b8b8b8; }
.tabs-top { height: 25px; }
.tabs-bottom { height: 24px; }
.tab { flex: none; display: flex; align-items: center; justify-content: center; height: 20px; margin-bottom: -1px; padding-bottom: 1px; background: linear-gradient(#ececec, #e2e2e2); border: 1px solid #c2c2c2; border-bottom: 1px solid #b8b8b8; border-radius: 3px 3px 0 0; font-size: 10.5px; }
.tab.on { height: 23px; padding: 1px 0 0; background: #f0f0f0; border-bottom-color: #f0f0f0; }
.tab-items { width: 52px; }
.tab-undo { width: 85px; }
.tab-layout { width: 57px; margin-bottom: 0; height: 21px; padding: 1px 0 0; }
.tab-props { width: 99px; }
.tab-guides { width: 55px; margin-bottom: 0; height: 21px; padding: 1px 0 0; }
.dock-title { height: 20px; flex: none; display: flex; align-items: center; justify-content: space-between; padding: 0 1px 0 4px; font-size: 11px; }
.dock-btns { display: flex; gap: 2px; }
.db { width: 12px; height: 12px; display: block; }
.tree { height: 188px; flex: none; background: #fff; border-top: 1px solid #a8a8a8; border-left: 1px solid #a8a8a8; }
.tree-head { height: 19px; display: flex; background: linear-gradient(#fbfbfb, #eeeeee); border-bottom: 1px solid #d0d0d0; }
.tree-row { height: 17px; display: flex; align-items: center; }
.col { display: flex; align-items: center; flex: none; }
.col-a { width: 35px; padding-left: 3px; }
.col-b { width: 36px; padding-left: 3px; }
.tree-head .col { border-right: 1px solid #d4d4d4; justify-content: flex-start; }
.tree-head .col-a { padding-left: 2px; }
.tree-head .col-b { padding-left: 4px; }
.col-c { padding-left: 2px; flex: 1; }
.tree-head .col-c { padding-left: 2px; border: 0; font-size: 10.5px; }
.tree-row .col-c { padding-left: 5px; }
.eye-h { width: 15px; height: 10px; opacity: .65; filter: grayscale(1); }
.lock-h { width: 13px; height: 15px; }
.map-mini { width: 14px; height: 13px; margin-right: 7px; }
.tree-row b { font-size: 11.3px; font-weight: 700; }
.cb { width: 14px; height: 14px; flex: none; background: #fff; border: 1px solid #b8b8b8; border-radius: 1px; font-size: 13px; line-height: 12px; text-align: center; font-family: "DejaVu Sans", sans-serif; color: #111; overflow: hidden; }
.splitter { height: 6px; flex: none; background-image: radial-gradient(#b0b0b0 0.6px, transparent 0.7px); background-size: 3px 3px; background-repeat: repeat-x; background-position: center 1px; background-clip: content-box; padding: 0 185px; }
.item-bar { height: 17px; flex: none; background: #c4c4c4; font-weight: 700; padding-left: 5px; line-height: 17px; font-size: 11.5px; }
.item-tools { height: 31px; flex: none; display: flex; align-items: center; padding: 0 0 1px 3px; }
.it { width: 26px; height: 24px; flex: none; display: flex; align-items: center; justify-content: center; }
.it-sep { width: 5px; height: 16px; flex: none; position: relative; }
.it-sep::before { content: ""; position: absolute; left: 2px; top: 0; bottom: 0; width: 1px; background: #d4d4d4; }
.ic18 { width: 18px; height: 18px; display: block; }
.scrollarea { flex: 1; min-height: 0; display: flex; border-top: 1px solid #b4b4b4; border-left: 1px solid #b4b4b4; }
.props { flex: 1; min-width: 0; overflow: hidden; padding: 0 12px 0 12px; }
.sec { margin-top: 5px; }
.sec:first-child { margin-top: 9px; }
.sec-ext { margin-top: 4px; }
.sec-h { margin: 0; height: 20px; display: flex; align-items: center; font-size: 11.2px; font-weight: 700; padding-bottom: 1px; }
.disc { width: 0; height: 0; border: 6px solid transparent; border-top: 7px solid #333; border-bottom: 0; margin: 1px 7px 0 1px; }
.box { background: #ebebeb; border: 1px solid #d8d8d8; border-radius: 2px; padding: 8px 16px 8px 11px; }
.box-layers { padding: 7px 16px 10px 11px; }
.row { height: 32px; display: flex; align-items: center; }
.row-c { height: 26px; }
.lbl { width: 68px; flex: none; font-size: 10.3px; padding-top: 2px; }
.lbl-s { width: 36px; }
.grow { flex: 1; min-width: 0; }
.input { height: 22px; background: #fff; border: 1px solid #acacac; border-radius: 3px; padding-left: 3px; line-height: 21px; font-size: 10.5px; display: block; }
.spin { height: 21px; display: flex; padding: 0; }
.spin-v { flex: 1; padding-left: 4px; line-height: 20px; }
.spin-b { width: 14px; border-left: 1px solid #ccc; display: flex; flex-direction: column; align-items: center; justify-content: center; gap: 3px; }
.tri-up { border: 4px solid transparent; border-bottom: 4px solid #555; border-top: 0; }
.tri-dn { border: 4px solid transparent; border-top: 4px solid #555; border-bottom: 0; }
.combo { height: 25px; background: linear-gradient(#fbfbfb, #ececec); border: 1px solid #acacac; border-radius: 3px; display: flex; align-items: center; justify-content: space-between; padding: 2px 10px 0 3px; font-size: 10.7px; }
.combo .tri { margin-top: -2px; }
.box-layers .combo { height: 23px; }
.sq { width: 24px; height: 24px; flex: none; margin-left: 6px; border: 1px solid #bbb; border-radius: 3px; background: linear-gradient(#fbfbfb, #ececec); display: flex; align-items: center; justify-content: center; position: relative; }
.ic16 { width: 18px; height: 18px; display: block; }
.ic-eye { width: 16px; height: 11px; display: block; }
.sq-tri { position: absolute; right: 2px; bottom: 3px; border: 3px solid transparent; border-top: 3px solid #555; border-bottom: 0; }
.dd { width: 24px; height: 22px; flex: none; margin-left: 9px; display: block; }
.box .cb { margin-left: 1px; }
.cl { margin-left: 4px; font-size: 10.5px; }
.box-layers .cl { padding-top: 2px; }
.cl-follow { width: 129px; flex: none; }
.vscroll { width: 13px; flex: none; display: flex; flex-direction: column; border-left: 1px solid #d4d4d4; background: #e6e6e6; }
.vs-btn { height: 17px; flex: none; background: #f0f0f0; display: flex; align-items: center; justify-content: center; }
.vs-handle { height: 153px; flex: none; background: #fafafa; border-top: 1px solid #d4d4d4; border-bottom: 1px solid #d4d4d4; }
.vs-track { flex: 1; }
```
FILE: app.js
```js
(function () {
  var c = document.getElementById("sat");
  var ctx = c.getContext("2d");
  var W = 190, H = 190;
  var s = 77123;
  function r() { s = (s * 1664525 + 1013904223) >>> 0; return s / 4294967296; }
  var pal = [
    ["#1e4020", 24], ["#2a5a2b", 15], ["#26702e", 5], ["#a8957f", 16], ["#cdbda6", 11],
    ["#75655a", 10], ["#9c8270", 8], ["#111f14", 7], ["#4b8a4d", 3], ["#e0d8c6", 1]
  ];
  var tot = pal.reduce(function (a, p) { return a + p[1]; }, 0);
  function pick() { var v = r() * tot; for (var i = 0; i < pal.length; i++) { v -= pal[i][1]; if (v <= 0) return pal[i][0]; } return pal[0][0]; }
  function rgb(h) { return [parseInt(h.slice(1, 3), 16), parseInt(h.slice(3, 5), 16), parseInt(h.slice(5, 7), 16)]; }
  var seeds = [];
  for (var i = 0; i < 300; i++) seeds.push({ x: r() * W, y: r() * H, c: rgb(pick()), sx: 0.7 + r() * 0.9 });
  var cities = [[92, 80, 32], [90, 36, 26], [152, 62, 28], [28, 84, 24], [28, 14, 16], [46, 133, 22], [158, 158, 22], [60, 50, 12], [112, 104, 16], [125, 46, 10], [172, 20, 10]];
  var whites = [[146, 72, 5], [150, 55, 4], [58, 137, 4.500], [90, 30, 3.500], [103, 84, 3], [160, 165, 3.500], [64, 126, 2.500], [80, 50, 2], [96, 112, 2], [112, 28, 2], [84, 84, 2], [136, 84, 2]];
  var img = ctx.createImageData(W, H);
  var grid = [];
  for (var g = 0; g < 64 * 64; g++) grid.push(r());
  function vn(x, y) {
    var xi = Math.floor(x), yi = Math.floor(y), fx = x - xi, fy = y - yi;
    function v(a, b) { return grid[((a & 63) << 6) | (b & 63)]; }
    var t = v(xi, yi) * (1 - fx) + v(xi + 1, yi) * fx, u = v(xi, yi + 1) * (1 - fx) + v(xi + 1, yi + 1) * fx;
    return t * (1 - fy) + u * fy;
  }
  for (var y = 0; y < H; y++) {
    for (var x = 0; x < W; x++) {
      var o = (y * W + x) * 4;
      var d1 = 1e9, d2 = 1e9, best = seeds[0];
      for (var k = 0; k < seeds.length; k++) {
        var q = seeds[k], dx = (x - q.x) * q.sx, dy = y - q.y, d = Math.sqrt(dx * dx + dy * dy);
        if (d < d1) { d2 = d1; d1 = d; best = q; } else if (d < d2) { d2 = d; }
      }
      var n = (r() - 0.5) * 18;
      var col = [best.c[0] + n, best.c[1] + n, best.c[2] + n];
      if (d2 - d1 < 0.9 && r() < 0.6) col = [16 + r() * 18, 34 + r() * 24, 20 + r() * 14];
      if (vn(x / 9 + 20, y / 9 + 11) > 0.78) col = [14 + r() * 14, 30 + r() * 22, 18 + r() * 12];
      var cv = 0;
      for (var m = 0; m < cities.length; m++) {
        var t = cities[m], e = Math.hypot(x - t[0], y - t[1]) / t[2];
        cv = Math.max(cv, 1 - e);
      }
      var pc = cv * 1.7 + (vn(x / 3.5, y / 3.5) - 0.5) * 1.1;
      if (r() < pc) {
        var g2 = 56 + 82 * vn(x / 1.4 + 5, y / 1.4 + 5) + r() * 26;
        col = [g2 * 0.9, g2 * 0.94, g2 * 1.14];
        if (r() < 0.22) col = [24 + r() * 18, 28 + r() * 18, 34 + r() * 18];
        if (r() < 0.035) col = [176, 192, 222];
      }
      for (var w = 0; w < whites.length; w++) {
        var h = whites[w], f = Math.hypot(x - h[0], (y - h[1]) * 0.7) / h[2];
        if (f + (vn(x / 1.6, y / 1.6) - 0.5) * 1.2 < 0.6) col = [222 + r() * 28, 236 + r() * 18, 255];
      }
      img.data[o] = col[0]; img.data[o + 1] = col[1]; img.data[o + 2] = col[2]; img.data[o + 3] = 255;
    }
  }
  ctx.putImageData(img, 0, 0);
  ctx.strokeStyle = "#0a160d";
  ctx.lineCap = "round";
  ctx.lineJoin = "round";
  var rivers = [
    [3, [92, 184, 104, 162, 118, 168, 130, 152, 146, 150, 168, 132]],
    [1.500, [0, 40, 18, 48, 38, 64, 54, 60]],
    [1.500, [20, 150, 40, 164, 56, 186]],
    [2, [104, 184, 120, 176, 136, 188]],
    [2, [100, 104, 108, 122, 118, 142]],
    [1.500, [150, 112, 158, 136, 156, 172]],
    [1.500, [8, 112, 38, 120, 60, 104]],
    [3, [118, 142, 124, 160, 132, 154]],
    [1.500, [160, 46, 186, 30]],
    [1.500, [130, 118, 150, 112, 172, 96]]
  ];
  rivers.forEach(function (rv) {
    var p = rv[1];
    ctx.lineWidth = rv[0];
    ctx.beginPath();
    ctx.moveTo(p[0], p[1]);
    for (var i = 2; i < p.length; i += 2) {
      var ax = p[i - 2], ay = p[i - 1], bx = p[i], by = p[i + 1];
      for (var j = 1; j <= 4; j++) {
        var u = j / 4;
        var jitter = j < 4 ? 3 : 0;
        ctx.lineTo(ax + (bx - ax) * u + (r() - 0.5) * jitter, ay + (by - ay) * u + (r() - 0.5) * jitter);
      }
    }
    ctx.stroke();
  });
  ctx.globalCompositeOperation = "destination-in";
  ctx.fillStyle = "#000";
  ctx.beginPath();
  ctx.moveTo(2, 3);
  ctx.lineTo(186, 1);
  ctx.lineTo(187, 85);
  ctx.lineTo(189, 184);
  ctx.lineTo(5, 188);
  ctx.lineTo(3, 90);
  ctx.closePath();
  ctx.fill();
})();
```
